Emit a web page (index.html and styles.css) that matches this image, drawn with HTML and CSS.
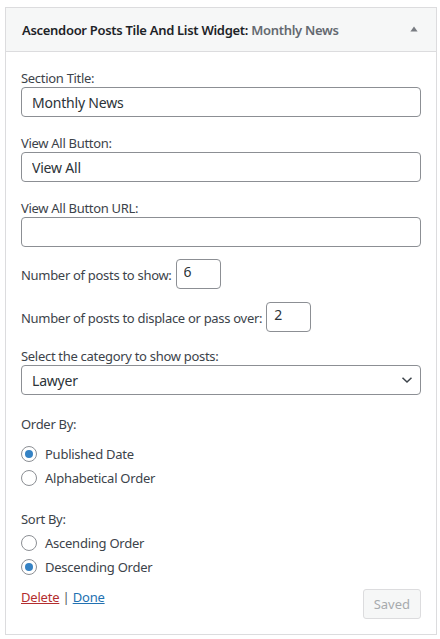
FILE: index.html
```html
<!DOCTYPE html>
<html>
<head>
<meta charset="utf-8">
<link rel="stylesheet" href="styles.css">
</head>
<body>
<div class="widget">
  <div class="widget-top">
    <h3 class="widget-title">Ascendoor Posts Tile And List Widget:<span class="in-title"> Monthly News</span></h3>
    <svg class="toggle" width="8" height="6" viewBox="0 0 8 6"><path d="M4 0.5 L7.6 5.5 L0.4 5.5 Z" fill="#787c82"/></svg>
  </div>
  <div class="widget-inside">
    <div class="field">
      <label class="lbl">Section Title:</label>
      <input class="text" type="text" value="Monthly News">
    </div>
    <div class="field">
      <label class="lbl">View All Button:</label>
      <input class="text" type="text" value="View All">
    </div>
    <div class="field">
      <label class="lbl">View All Button URL:</label>
      <input class="text" type="text" value="">
    </div>
    <div class="inline-row first">
      <label class="lbl-inline">Number of posts to show:</label>
      <input class="num" type="text" value="6">
    </div>
    <div class="inline-row second">
      <label class="lbl-inline">Number of posts to displace or pass over:</label>
      <input class="num" type="text" value="2">
    </div>
    <div class="field select-field">
      <label class="lbl">Select the category to show posts:</label>
      <div class="select-wrap">
        <select class="select"><option>Lawyer</option></select>
        <svg class="chev" width="12" height="8" viewBox="0 0 12 8"><path d="M1.5 1.8 L6 6 L10.5 1.8" fill="none" stroke="#3c434a" stroke-width="1.5"/></svg>
      </div>
    </div>
    <div class="group-label order">Order By:</div>
    <div class="radios order-list">
      <label class="radio-row"><span class="radio checked"></span>Published Date</label>
      <label class="radio-row"><span class="radio"></span>Alphabetical Order</label>
    </div>
    <div class="group-label sort">Sort By:</div>
    <div class="radios sort-list">
      <label class="radio-row"><span class="radio"></span>Ascending Order</label>
      <label class="radio-row"><span class="radio checked"></span>Descending Order</label>
    </div>
    <div class="controls">
      <div class="links"><a class="delete" href="#">Delete</a> | <a class="done" href="#">Done</a></div>
      <button class="saved" disabled>Saved</button>
    </div>
  </div>
</div>
</body>
</html>
```
FILE: styles.css
```css
html, body {
  margin: 0;
  padding: 0;
  background: #ffffff;
}
body {
  padding: 7px 3px 0 5px;
  font-family: "Noto Sans", "Open Sans", sans-serif;
  font-size: 13px;
  color: #3c434a;
}
.widget {
  width: 430px;
  border: 1px solid #dcdcde;
  background: #fff;
}
.widget-top {
  height: 43px;
  background: #f6f7f7;
  border-bottom: 1px solid #dcdcde;
  display: flex;
  align-items: center;
  justify-content: space-between;
  padding: 0 18px 0 16px;
}
.widget-title {
  margin: 0;
  font-size: 13px;
  font-weight: 600;
  color: #1d2327;
  letter-spacing: -0.3px;
}
.in-title {
  font-weight: 600;
  color: #646970;
}
.toggle {
  display: block;
  margin-top: -1px;
}
.widget-inside {
  padding: 18px 15px 15px 15px;
  display: flex;
  flex-direction: column;
}
.lbl, .lbl-inline, .group-label {
  line-height: 17px;
  letter-spacing: -0.3px;
}
.lbl {
  display: block;
}
.field {
  display: flex;
  flex-direction: column;
  margin-bottom: 18px;
}
.text, .num, .select {
  box-sizing: border-box;
  height: 30px;
  border: 1px solid #8c8f94;
  border-radius: 4px;
  font-family: "Noto Sans", "Open Sans", sans-serif;
  font-size: 14px;
  color: #2c3338;
  padding: 0 10px;
  background: #fff;
  margin: 0;
  outline: none;
}
.text {
  width: 100%;
  letter-spacing: -0.2px;
}
.inline-row {
  display: flex;
  align-items: center;
}
.inline-row.first {
  margin-top: -6px;
}
.inline-row.second {
  margin-top: 13px;
}
.lbl-inline {
  margin-right: 4px;
  padding-top: 3px;
}
.num {
  width: 45px;
  padding: 0 7px;
  padding-bottom: 6px;
}
.select-field {
  margin-top: 16px;
  margin-bottom: 0;
}
.select-wrap {
  position: relative;
}
.select {
  width: 100%;
  appearance: none;
  -webkit-appearance: none;
  padding: 0 24px 0 10px;
  letter-spacing: -0.2px;
}
.chev {
  position: absolute;
  right: 8px;
  top: 11px;
}
.group-label.order {
  margin-top: 21px;
}
.order-list {
  margin-top: 9px;
}
.group-label.sort {
  margin-top: 21px;
}
.sort-list {
  margin-top: 3px;
}
.radio-row {
  display: flex;
  align-items: center;
  height: 24px;
  letter-spacing: -0.25px;
}
.radio {
  box-sizing: border-box;
  width: 16px;
  height: 16px;
  border: 1px solid #8c8f94;
  border-radius: 50%;
  margin-right: 8px;
  display: flex;
  align-items: center;
  justify-content: center;
  background: #fff;
}
.radio.checked::after {
  content: "";
  width: 8px;
  height: 8px;
  border-radius: 50%;
  background: #3582c4;
}
.controls {
  display: flex;
  justify-content: space-between;
  align-items: flex-start;
  margin-top: 10px;
}
.links {
  line-height: 17px;
  color: #50575e;
  letter-spacing: -0.2px;
}
.links a {
  text-decoration: underline;
}
.delete {
  color: #b32d2e;
}
.done {
  color: #2271b1;
}
.saved {
  box-sizing: border-box;
  height: 30px;
  padding: 0 10px;
  margin-top: 0;
  border: 1px solid #dcdcde;
  border-radius: 3px;
  background: #f6f7f7;
  color: #a7aaad;
  font-family: "Noto Sans", "Open Sans", sans-serif;
  font-size: 13px;
}
```
